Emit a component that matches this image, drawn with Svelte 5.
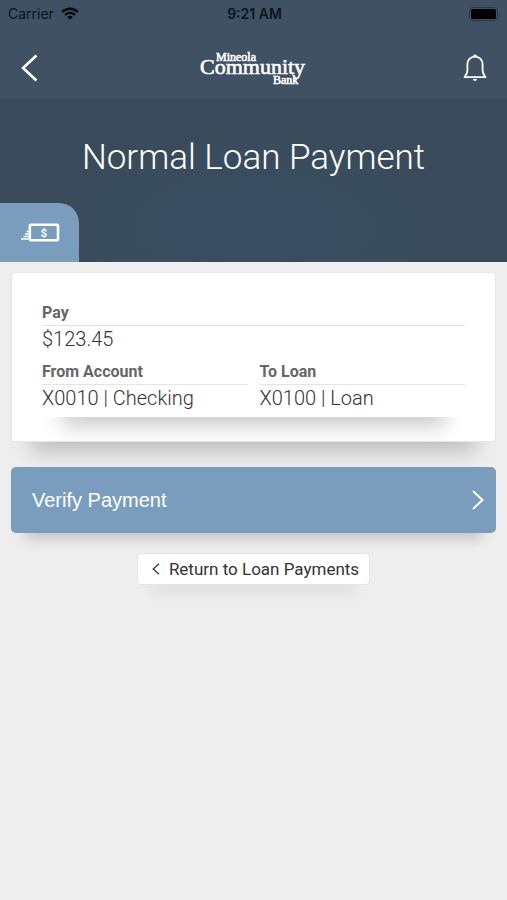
<script>
  let carrier = 'Carrier';
  let time = '9:21 AM';

  let payment = {
    amount: '$123.45',
    from: 'X0010 | Checking',
    to: 'X0100 | Loan'
  };
</script>

<div class="screen">
  <header class="top">
    <div class="status-bar">
      <div class="carrier">
        <span>{carrier}</span>
        <svg width="18" height="13" viewBox="0 0 18 13" fill="none" stroke="#05090d">
          <path d="M1.2 5 A11 11 0 0 1 16.8 5" stroke-width="2.3" />
          <path d="M4 8 A7 7 0 0 1 14 8" stroke-width="2.2" />
          <path d="M6.2 10.1 A4 4 0 0 1 11.8 10.1 L9 12.8 Z" fill="#05090d" stroke="none" />
        </svg>
      </div>
      <span class="time">{time}</span>
      <svg class="battery" width="32" height="14" viewBox="0 0 32 14">
        <rect x="0.5" y="0.5" width="28" height="13" rx="3.5" fill="none" stroke="#2b3946" />
        <rect x="2" y="2" width="25" height="10" rx="2" fill="#000" />
        <path d="M30 5 Q31.5 7 30 9 Z" fill="#2b3946" />
      </svg>
    </div>

    <nav class="nav-bar">
      <button type="button" class="icon-button" aria-label="Back">
        <svg width="18" height="28" viewBox="0 0 18 28" fill="none" stroke="#fff" stroke-width="2.6">
          <path d="M16.5 1.5 L3 14 L16.5 26.5" />
        </svg>
      </button>
      <svg class="logo" width="112" height="38" viewBox="0 0 112 38" role="img" aria-label="Mineola Community Bank">
        <text x="18" y="12" font-size="12">Mineola</text>
        <text x="2" y="25" font-size="22">Community</text>
        <text x="75" y="35" font-size="12">Bank</text>
      </svg>
      <button type="button" class="icon-button" aria-label="Notifications">
        <svg width="24" height="28" viewBox="0 0 24 28" fill="none" stroke="#fff" stroke-width="1.8" stroke-linejoin="round">
          <path d="M12 2.7 C7.4 2.7 4.4 6.2 4.4 10.3 V16.5 C4.4 19.3 3.2 20.8 1.5 23.2 H22.5 C20.8 20.8 19.6 19.3 19.6 16.5 V10.3 C19.6 6.2 16.6 2.7 12 2.7 Z" />
          <path d="M10.7 2.4 Q12 0.6 13.3 2.4" />
          <path d="M10 25 H14 Q13.6 27 12 27 Q10.4 27 10 25 Z" fill="#fff" stroke="none" />
        </svg>
      </button>
    </nav>
  </header>

  <section class="hero">
    <h1>Normal Loan Payment</h1>
    <div class="tab">
      <svg width="40" height="20" viewBox="0 0 40 20" fill="none" stroke="#fff">
        <rect x="9.8" y="1.8" width="28.2" height="15.4" rx="1" stroke-width="2.6" />
        <path d="M6.5 8.5 H8.5 M5 11 H8.5 M3.5 13.5 H8.5 M1 16 H8.5" stroke-width="1.4" />
        <text x="24" y="13.5" font-size="11" text-anchor="middle">$</text>
      </svg>
    </div>
  </section>

  <main>
    <div class="card">
      <dl class="details">
        <div class="field wide">
          <dt>Pay</dt>
          <dd>{payment.amount}</dd>
        </div>
        <div class="field">
          <dt>From Account</dt>
          <dd>{payment.from}</dd>
        </div>
        <div class="field">
          <dt>To Loan</dt>
          <dd>{payment.to}</dd>
        </div>
      </dl>
    </div>

    <button type="button" class="verify">
      <span>Verify Payment</span>
      <svg width="12" height="20" viewBox="0 0 12 20" fill="none" stroke="#fff" stroke-width="2">
        <path d="M1 1 L10.5 10 L1 19" />
      </svg>
    </button>

    <button type="button" class="return">
      <svg width="8" height="12" viewBox="0 0 8 12" fill="none" stroke="#444" stroke-width="1.5">
        <path d="M7 0.7 L1.3 6 L7 11.3" />
      </svg>
      <span>Return to Loan Payments</span>
    </button>
  </main>
</div>

<style>
  :global(body) {
    background: #eee;
    font-family: Roboto, sans-serif;
  }

  .screen {
    min-height: 100vh;
    background: #eee;
  }

  svg {
    display: block;
  }

  button {
    font-family: inherit;
    border: none;
    cursor: pointer;
  }

  .top {
    background: #3f5162;
  }

  .status-bar {
    display: grid;
    grid-template-columns: 1fr auto 1fr;
    align-items: center;
    height: 27px;
    padding: 0 6px 0 8px;
    font-family: Inter, sans-serif;
    font-size: 14px;
    color: #0c141c;
  }

  .carrier {
    display: flex;
    align-items: center;
    gap: 7px;
  }

  .time {
    font-weight: 600;
  }

  .battery {
    justify-self: end;
  }

  .nav-bar {
    display: flex;
    align-items: center;
    justify-content: space-between;
    height: 71px;
    padding: 10px 20px 0;
    box-sizing: border-box;
  }

  .icon-button {
    width: 24px;
    padding: 0;
    background: none;
  }

  .logo text {
    font-family: 'Liberation Serif', serif;
    fill: #fff;
    stroke: #fff;
    stroke-width: 0.6;
  }

  .hero {
    display: flex;
    flex-direction: column;
    justify-content: space-between;
    height: 164px;
    background: radial-gradient(ellipse at 50% 80%, #3a4e63, #394b5a 60%);
  }

  h1 {
    margin: 0;
    padding-top: 37px;
    font-size: 35px;
    font-weight: 300;
    line-height: 46px;
    text-align: center;
    color: #fff;
  }

  .tab {
    display: flex;
    align-items: center;
    justify-content: center;
    width: 79px;
    height: 59px;
    background: #7a9dbd;
    border-radius: 0 20px 0 0;
  }

  .tab text {
    font-family: Roboto, sans-serif;
    font-weight: bold;
    fill: #fff;
    stroke: none;
  }

  main {
    display: flex;
    flex-direction: column;
    align-items: center;
    padding: 10px 11px;
  }

  .card {
    width: 100%;
    box-sizing: border-box;
    padding: 31px 30px 24px;
    border: 1px solid #e6e6e6;
    border-radius: 4px;
    background: #fff;
    box-shadow: 0 30px 20px -20px rgba(0, 0, 0, 0.2);
  }

  .details {
    display: grid;
    grid-template-columns: 1fr 1fr;
    gap: 11px 12px;
    margin: 0;
    padding-bottom: 6px;
    box-shadow: 0 30px 20px -20px rgba(0, 0, 0, 0.2);
  }

  .wide {
    grid-column: 1 / -1;
  }

  dt {
    padding-bottom: 3px;
    border-bottom: 1px solid #e4e4e4;
    font-size: 16px;
    font-weight: 700;
    line-height: 18px;
    color: #666;
  }

  dd {
    margin: 0;
    font-size: 20px;
    font-weight: 300;
    line-height: 26px;
    color: #333;
  }

  .verify {
    display: flex;
    align-items: center;
    justify-content: space-between;
    width: 100%;
    height: 66px;
    margin-top: 25px;
    padding: 0 12px 0 21px;
    border-radius: 5px;
    background: #7a9dbd;
    color: #fff;
    font-family: 'Liberation Sans', Arial, sans-serif;
    font-size: 20px;
    box-shadow: 0 20px 14px -14px rgba(0, 0, 0, 0.18);
  }

  .return {
    display: flex;
    align-items: center;
    gap: 9px;
    height: 32px;
    margin-top: 20px;
    padding: 0 10px 0 14px;
    border: 1px solid #e4e4e4;
    border-radius: 4px;
    background: #fff;
    color: #333;
    font-size: 17px;
    box-shadow: 0 20px 14px -14px rgba(0, 0, 0, 0.18);
  }
</style>
